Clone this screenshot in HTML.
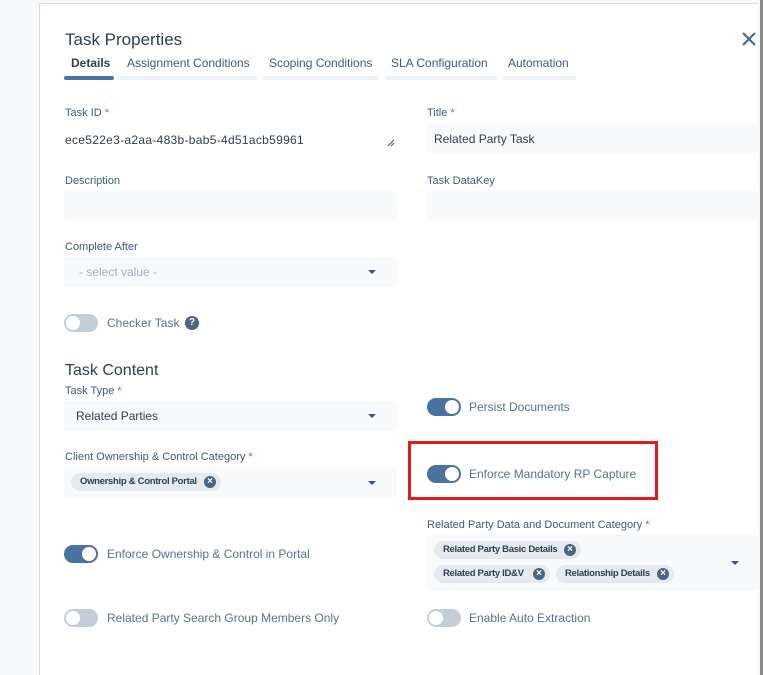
<!DOCTYPE html>
<html><head><style>
*{box-sizing:border-box;margin:0;padding:0}
body{width:763px;height:675px;overflow:hidden;background:#f7f8fb;font-family:"Liberation Sans",sans-serif;position:relative}
.panel{position:absolute;left:39px;top:3px;width:719px;height:672px;background:#fff;border-left:1px solid #d5dbe3;border-top:1px solid #dcdfe3}
.rb{position:absolute;left:760px;top:0;width:3px;height:675px;background:#8a8a8a}
.a{position:absolute;white-space:nowrap}
.h{font-size:17px;color:#2e3e52}
.lbl{font-size:11px;color:#3d5a7a}
.st{color:#e5484d}
.tab{font-size:12px;color:#3d5a7a}
.bar{position:absolute;height:4px;border-radius:3px;background:#edf1f5;top:76px}
.fld{position:absolute;background:#f8f9fb;border-radius:3px}
.val{font-size:12px;color:#333d48}
.tg{position:absolute;width:34px;height:18px;border-radius:9px;background:#c3ced9}
.tg::after{content:"";position:absolute;left:2px;top:2px;width:14px;height:14px;border-radius:50%;background:#fff}
.tg.on{background:#4a72a0}
.tg.on::after{left:18px}
.tl{font-size:12px;color:#5a718a}
.car{position:absolute;width:0;height:0;border-left:4px solid transparent;border-right:4px solid transparent;border-top:4px solid #3d5470}
.chip{position:absolute;height:18px;border-radius:9px;background:#e6eaef;font-size:9.5px;font-weight:bold;color:#2e3e52;padding:3px 0 0 9px;letter-spacing:-0.3px}
.x{position:absolute;right:5px;width:12px;height:12px;border-radius:50%;background:#4d6480;color:#fff;font-size:10px;line-height:12px;text-align:center;top:3px;letter-spacing:0}
</style></head><body>
<div class="panel"></div>
<div class="rb"></div>
<div class="a h" style="left:65px;top:30px">Task Properties</div>
<svg class="a" style="left:742px;top:32px" width="14" height="14"><path d="M1 1L13 13M13 1L1 13" stroke="#4d6a8a" stroke-width="2.2"/></svg>
<div class="a tab" style="left:71px;top:56px;font-weight:bold;color:#2e3e52">Details</div>
<div class="a tab" style="left:127px;top:56px">Assignment Conditions</div>
<div class="a tab" style="left:269px;top:56px">Scoping Conditions</div>
<div class="a tab" style="left:391px;top:56px">SLA Configuration</div>
<div class="a tab" style="left:508px;top:56px">Automation</div>
<div class="bar" style="left:64px;width:50px;background:#4a72a0"></div>
<div class="bar" style="left:120px;width:137px"></div>
<div class="bar" style="left:263px;width:116px"></div>
<div class="bar" style="left:385px;width:112px"></div>
<div class="bar" style="left:503px;width:73px"></div>

<div class="a lbl" style="left:65px;top:107px">Task ID <span class="st">*</span></div>
<div class="a val" style="left:65px;top:133px;letter-spacing:0.3px">ece522e3-a2aa-483b-bab5-4d51acb59961</div>
<svg class="a" style="left:387px;top:139px" width="8" height="8"><path d="M1 7L7 1M4 7L7 4" stroke="#555" stroke-width="1"/></svg>
<div class="a lbl" style="left:427px;top:107px">Title <span class="st">*</span></div>
<div class="fld" style="left:427px;top:123px;width:331px;height:30px"></div>
<div class="a val" style="left:434px;top:132px">Related Party Task</div>

<div class="a lbl" style="left:65px;top:175px">Description</div>
<div class="fld" style="left:64px;top:191px;width:333px;height:30px"></div>
<div class="a lbl" style="left:427px;top:175px">Task DataKey</div>
<div class="fld" style="left:427px;top:191px;width:331px;height:30px"></div>

<div class="a lbl" style="left:65px;top:241px">Complete After</div>
<div class="fld" style="left:64px;top:257px;width:333px;height:30px"></div>
<div class="a" style="left:79px;top:265px;font-size:12px;color:#a7b1bd">- select value -</div>
<div class="car" style="left:368px;top:270px"></div>

<div class="tg" style="left:64px;top:314px"></div>
<div class="a tl" style="left:107px;top:316px">Checker Task</div>
<div class="a" style="left:185px;top:316px;width:14px;height:14px;border-radius:50%;background:#4d6480;color:#fff;font-size:10px;font-weight:bold;text-align:center;line-height:14px">?</div>

<div class="a h" style="left:65px;top:362px;font-size:16px">Task Content</div>
<div class="a lbl" style="left:65px;top:385px">Task Type <span class="st">*</span></div>
<div class="fld" style="left:64px;top:401px;width:333px;height:30px"></div>
<div class="a val" style="left:76px;top:409px">Related Parties</div>
<div class="car" style="left:368px;top:414px"></div>

<div class="tg on" style="left:427px;top:398px"></div>
<div class="a tl" style="left:469px;top:400px">Persist Documents</div>

<div class="a lbl" style="left:65px;top:451px">Client Ownership &amp; Control Category <span class="st">*</span></div>
<div class="fld" style="left:64px;top:467px;width:333px;height:30px"></div>
<div class="chip" style="left:71px;top:473px;width:150px">Ownership &amp; Control Portal<span class="x">×</span></div>
<div class="car" style="left:368px;top:481px"></div>

<div class="a" style="left:408px;top:441px;width:250px;height:59px;border:3px solid #e31b1b"></div>
<div class="tg on" style="left:427px;top:465px"></div>
<div class="a tl" style="left:469px;top:467px">Enforce Mandatory RP Capture</div>

<div class="a lbl" style="left:427px;top:519px">Related Party Data and Document Category <span class="st">*</span></div>
<div class="fld" style="left:427px;top:535px;width:331px;height:56px"></div>
<div class="chip" style="left:434px;top:541px;width:147px">Related Party Basic Details<span class="x">×</span></div>
<div class="chip" style="left:434px;top:565px;width:116px">Related Party ID&amp;V<span class="x">×</span></div>
<div class="chip" style="left:556px;top:565px;width:118px">Relationship Details<span class="x">×</span></div>
<div class="car" style="left:731px;top:561px"></div>

<div class="tg on" style="left:64px;top:545px"></div>
<div class="a tl" style="left:107px;top:547px">Enforce Ownership &amp; Control in Portal</div>

<div class="tg" style="left:64px;top:609px"></div>
<div class="a tl" style="left:107px;top:611px">Related Party Search Group Members Only</div>
<div class="tg" style="left:427px;top:609px"></div>
<div class="a tl" style="left:469px;top:611px">Enable Auto Extraction</div>
</body></html>
